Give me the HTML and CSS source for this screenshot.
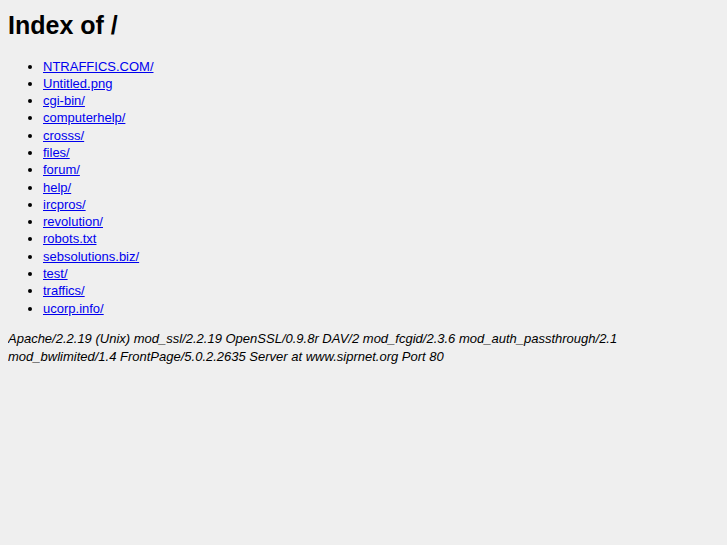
FILE: index.html
```html
<!DOCTYPE html>
<html>
<head>
<meta charset="utf-8">
<title>Index of /</title>
<link rel="stylesheet" href="styles.css">
</head>
<body>
<h1 class="title">Index of /</h1>
<ul class="listing">
<li><a href="#">NTRAFFICS.COM/</a></li>
<li><a href="#">Untitled.png</a></li>
<li><a href="#">cgi-bin/</a></li>
<li><a href="#">computerhelp/</a></li>
<li><a href="#">crosss/</a></li>
<li><a href="#">files/</a></li>
<li><a href="#">forum/</a></li>
<li><a href="#">help/</a></li>
<li><a href="#">ircpros/</a></li>
<li><a href="#">revolution/</a></li>
<li><a href="#">robots.txt</a></li>
<li><a href="#">sebsolutions.biz/</a></li>
<li><a href="#">test/</a></li>
<li><a href="#">traffics/</a></li>
<li><a href="#">ucorp.info/</a></li>
</ul>
<address class="server">Apache/2.2.19 (Unix) mod_ssl/2.2.19 OpenSSL/0.9.8r DAV/2 mod_fcgid/2.3.6 mod_auth_passthrough/2.1 mod_bwlimited/1.4 FrontPage/5.0.2.2635 Server at www.siprnet.org Port 80</address>
</body>
</html>
```
FILE: styles.css
```css
html {
  background: #efefef;
}
body {
  margin: 8px;
  font-family: "Liberation Sans", Arial, sans-serif;
  font-size: 13px;
  color: #000;
}
.title {
  font-size: 25px;
  font-weight: bold;
  margin: 0 0 15.5px 0;
  line-height: 34px;
}
.listing {
  margin: 0 0 13px 0;
  padding-left: 35px;
  line-height: 17.3px;
}
.listing a {
  color: #0000ee;
}
.server {
  font-style: italic;
  line-height: 18px;
}
```
